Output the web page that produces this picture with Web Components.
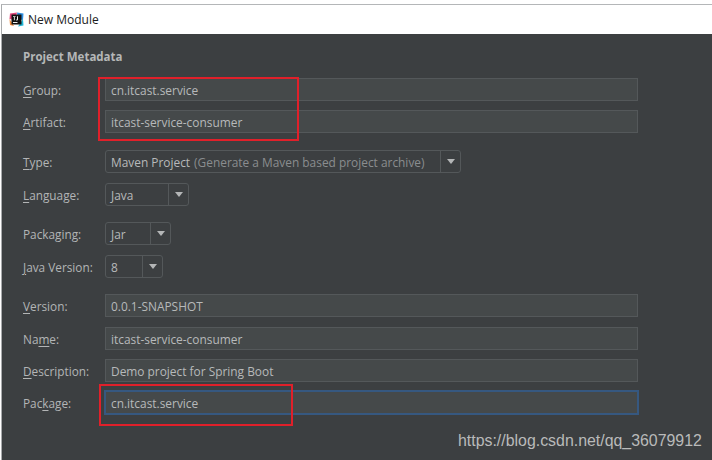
<!DOCTYPE html>
<html>
<head>
<meta charset="utf-8">
<title>New Module</title>
<style>
html, body { margin: 0; padding: 0; background: #fff; }
body { width: 712px; height: 460px; overflow: hidden; font-family: "Open Sans", "Noto Sans", sans-serif; }
</style>
</head>
<body>
<module-dialog>
  <form-row label="Group" key="G" top="0"><text-field value="cn.itcast.service"></text-field></form-row>
  <form-row label="Artifact" key="A" top="9"><text-field value="itcast-service-consumer"></text-field></form-row>
  <form-row label="Type" key="T" top="17"><combo-box width="356" value="Maven Project" hint="(Generate a Maven based project archive)"></combo-box></form-row>
  <form-row label="Language" key="L" top="10"><combo-box width="84" value="Java"></combo-box></form-row>
  <form-row label="Packaging" key="g" top="16"><combo-box width="66" value="Jar"></combo-box></form-row>
  <form-row label="Java Version" key="J" top="10"><combo-box width="58" value="8"></combo-box></form-row>
  <form-row label="Version" key="V" top="16"><text-field value="0.0.1-SNAPSHOT"></text-field></form-row>
  <form-row label="Name" key="m" top="10"><text-field value="itcast-service-consumer"></text-field></form-row>
  <form-row label="Description" key="D" top="9"><text-field value="Demo project for Spring Boot"></text-field></form-row>
  <form-row label="Package" key="k" top="9"><text-field focused value="cn.itcast.service"></text-field></form-row>
  <red-mark style="left:98px;top:77px;width:197px;height:60px"></red-mark>
  <red-mark style="left:99px;top:384px;width:190px;height:38px"></red-mark>
  <span slot="watermark">https://blog.csdn.net/qq_36079912</span>
</module-dialog>

<script>
class ModuleDialog extends HTMLElement {
    constructor() {
        super();
        this.attachShadow({ mode: 'open' });
        this.shadowRoot.innerHTML = `
      <style>
        :host {
          display: block;
          position: relative;
          width: 712px;
          height: 460px;
          box-sizing: border-box;
          padding-top: 4px;
          background: #fff;
        }
        .frame {
          height: 456px;
          box-sizing: border-box;
          margin-left: 1px;
          border-top: 1px solid #b4b6b8;
          border-left: 1px solid #a9abad;
          display: flex;
          flex-direction: column;
        }
        .title {
          height: 29px;
          flex: none;
          display: flex;
          align-items: center;
          gap: 4px;
          padding-left: 7px;
          background: #fff;
          color: #1c1c1c;
          font-size: 12px;
        }
        .body {
          flex: 1;
          background: #3c3f41;
          padding: 15px 74px 0 21px;
          color: #bbb;
        }
        h2 {
          margin: 0 0 13px;
          font-size: 11.5px;
          line-height: 16px;
          font-weight: 700;
          color: #b5b7b8;
        }
        .wm {
          position: absolute;
          left: 458px;
          top: 431px;
          font-family: "Liberation Sans", sans-serif;
          font-size: 15.9px;
          line-height: 20px;
          color: #b9baba;
          white-space: nowrap;
        }
      </style>
      <div class="frame">
        <div class="title">
          <svg width="15" height="15" viewBox="0 0 15 15">
            <path d="M1 1.5 L8 0.5 L6 8 L0.5 7z" fill="#e0457b"/>
            <path d="M8 .5 L14.5 1.5 L14 8 L9 7z" fill="#2f8fe0"/>
            <path d="M.5 7 L5 14 L1 13z" fill="#f08a3c"/>
            <path d="M14 7 L14.5 13.5 L9 14.5z" fill="#22b8d8"/>
            <rect x="2.5" y="2.5" width="10" height="10" fill="#111"/>
            <rect x="4" y="10" width="4.5" height="1" fill="#eee"/>
            <path d="M4 4.2h2.6v.9h-.8v3.2H4.9V5.1H4z M8 4.2h1v3.4q0 .9-1.2.9h-.6v-.9h.5q.3 0 .3-.3z" fill="#eee"/>
          </svg>
          <span>New Module</span>
        </div>
        <div class="body">
          <h2>Project Metadata</h2>
          <slot></slot>
        </div>
      </div>
      <div class="wm"><slot name="watermark"></slot></div>
    `;
    }
}

class FormRow extends HTMLElement {
    constructor() {
        super();
        this.attachShadow({ mode: 'open' });
    }

    connectedCallback() {
        const label = this.getAttribute('label');
        const key = this.getAttribute('key');
        const i = label.indexOf(key);
        this.shadowRoot.innerHTML = `
      <style>
        :host {
          display: flex;
          align-items: center;
          height: 23px;
          margin-top: ${this.getAttribute('top') || 0}px;
          font-size: 11.8px;
          color: #b3b5b6;
        }
        .label { width: 82px; flex: none; white-space: nowrap; }
        u { text-underline-offset: 2px; }
      </style>
      <div class="label">${label.slice(0, i)}<u>${key}</u>${label.slice(i + 1)}:</div>
      <slot></slot>
    `;
    }
}

class TextField extends HTMLElement {
    constructor() {
        super();
        this.attachShadow({ mode: 'open' });
    }

    connectedCallback() {
        const focused = this.hasAttribute('focused');
        this.shadowRoot.innerHTML = `
      <style>
        :host {
          display: flex;
          align-items: center;
          flex: 1;
          box-sizing: border-box;
          height: 23px;
          padding-left: 5px;
          background: #45494a;
          border: 1px solid ${focused ? '#365880' : '#54585a'};
          ${focused ? 'outline: 1px solid #365880;' : ''}
          color: #b7b9ba;
          font-size: 11.9px;
        }
      </style>
      <span>${this.getAttribute('value')}</span>
    `;
    }
}

class ComboBox extends HTMLElement {
    constructor() {
        super();
        this.attachShadow({ mode: 'open' });
    }

    connectedCallback() {
        const hint = this.getAttribute('hint');
        this.shadowRoot.innerHTML = `
      <style>
        :host {
          display: flex;
          box-sizing: border-box;
          width: ${this.getAttribute('width')}px;
          height: 23px;
          border: 1px solid #54585a;
          border-radius: 3px;
          background: #3c3f41;
          color: #b7b9ba;
          font-size: 11.9px;
        }
        .value { flex: 1; display: flex; align-items: center; padding-left: 5px; gap: 4px; white-space: nowrap; }
        .hint { color: #8a8d8f; }
        .arrow {
          width: 19px;
          flex: none;
          display: flex;
          align-items: center;
          justify-content: center;
          border-left: 1px solid #54585a;
        }
      </style>
      <div class="value">${this.getAttribute('value')}${hint ? `<span class="hint">${hint}</span>` : ''}</div>
      <div class="arrow">
        <svg width="8" height="5" viewBox="0 0 8 5"><path d="M0 0h8L4 5z" fill="#b4b6b7"/></svg>
      </div>
    `;
    }
}

class RedMark extends HTMLElement {
    constructor() {
        super();
        this.attachShadow({ mode: 'open' });
        this.shadowRoot.innerHTML = `
      <style>
        :host {
          display: block;
          position: absolute;
          border: 2px solid #e0202a;
          pointer-events: none;
        }
      </style>
    `;
    }
}

customElements.define('module-dialog', ModuleDialog);
customElements.define('form-row', FormRow);
customElements.define('text-field', TextField);
customElements.define('combo-box', ComboBox);
customElements.define('red-mark', RedMark);
</script>
</body>
</html>
